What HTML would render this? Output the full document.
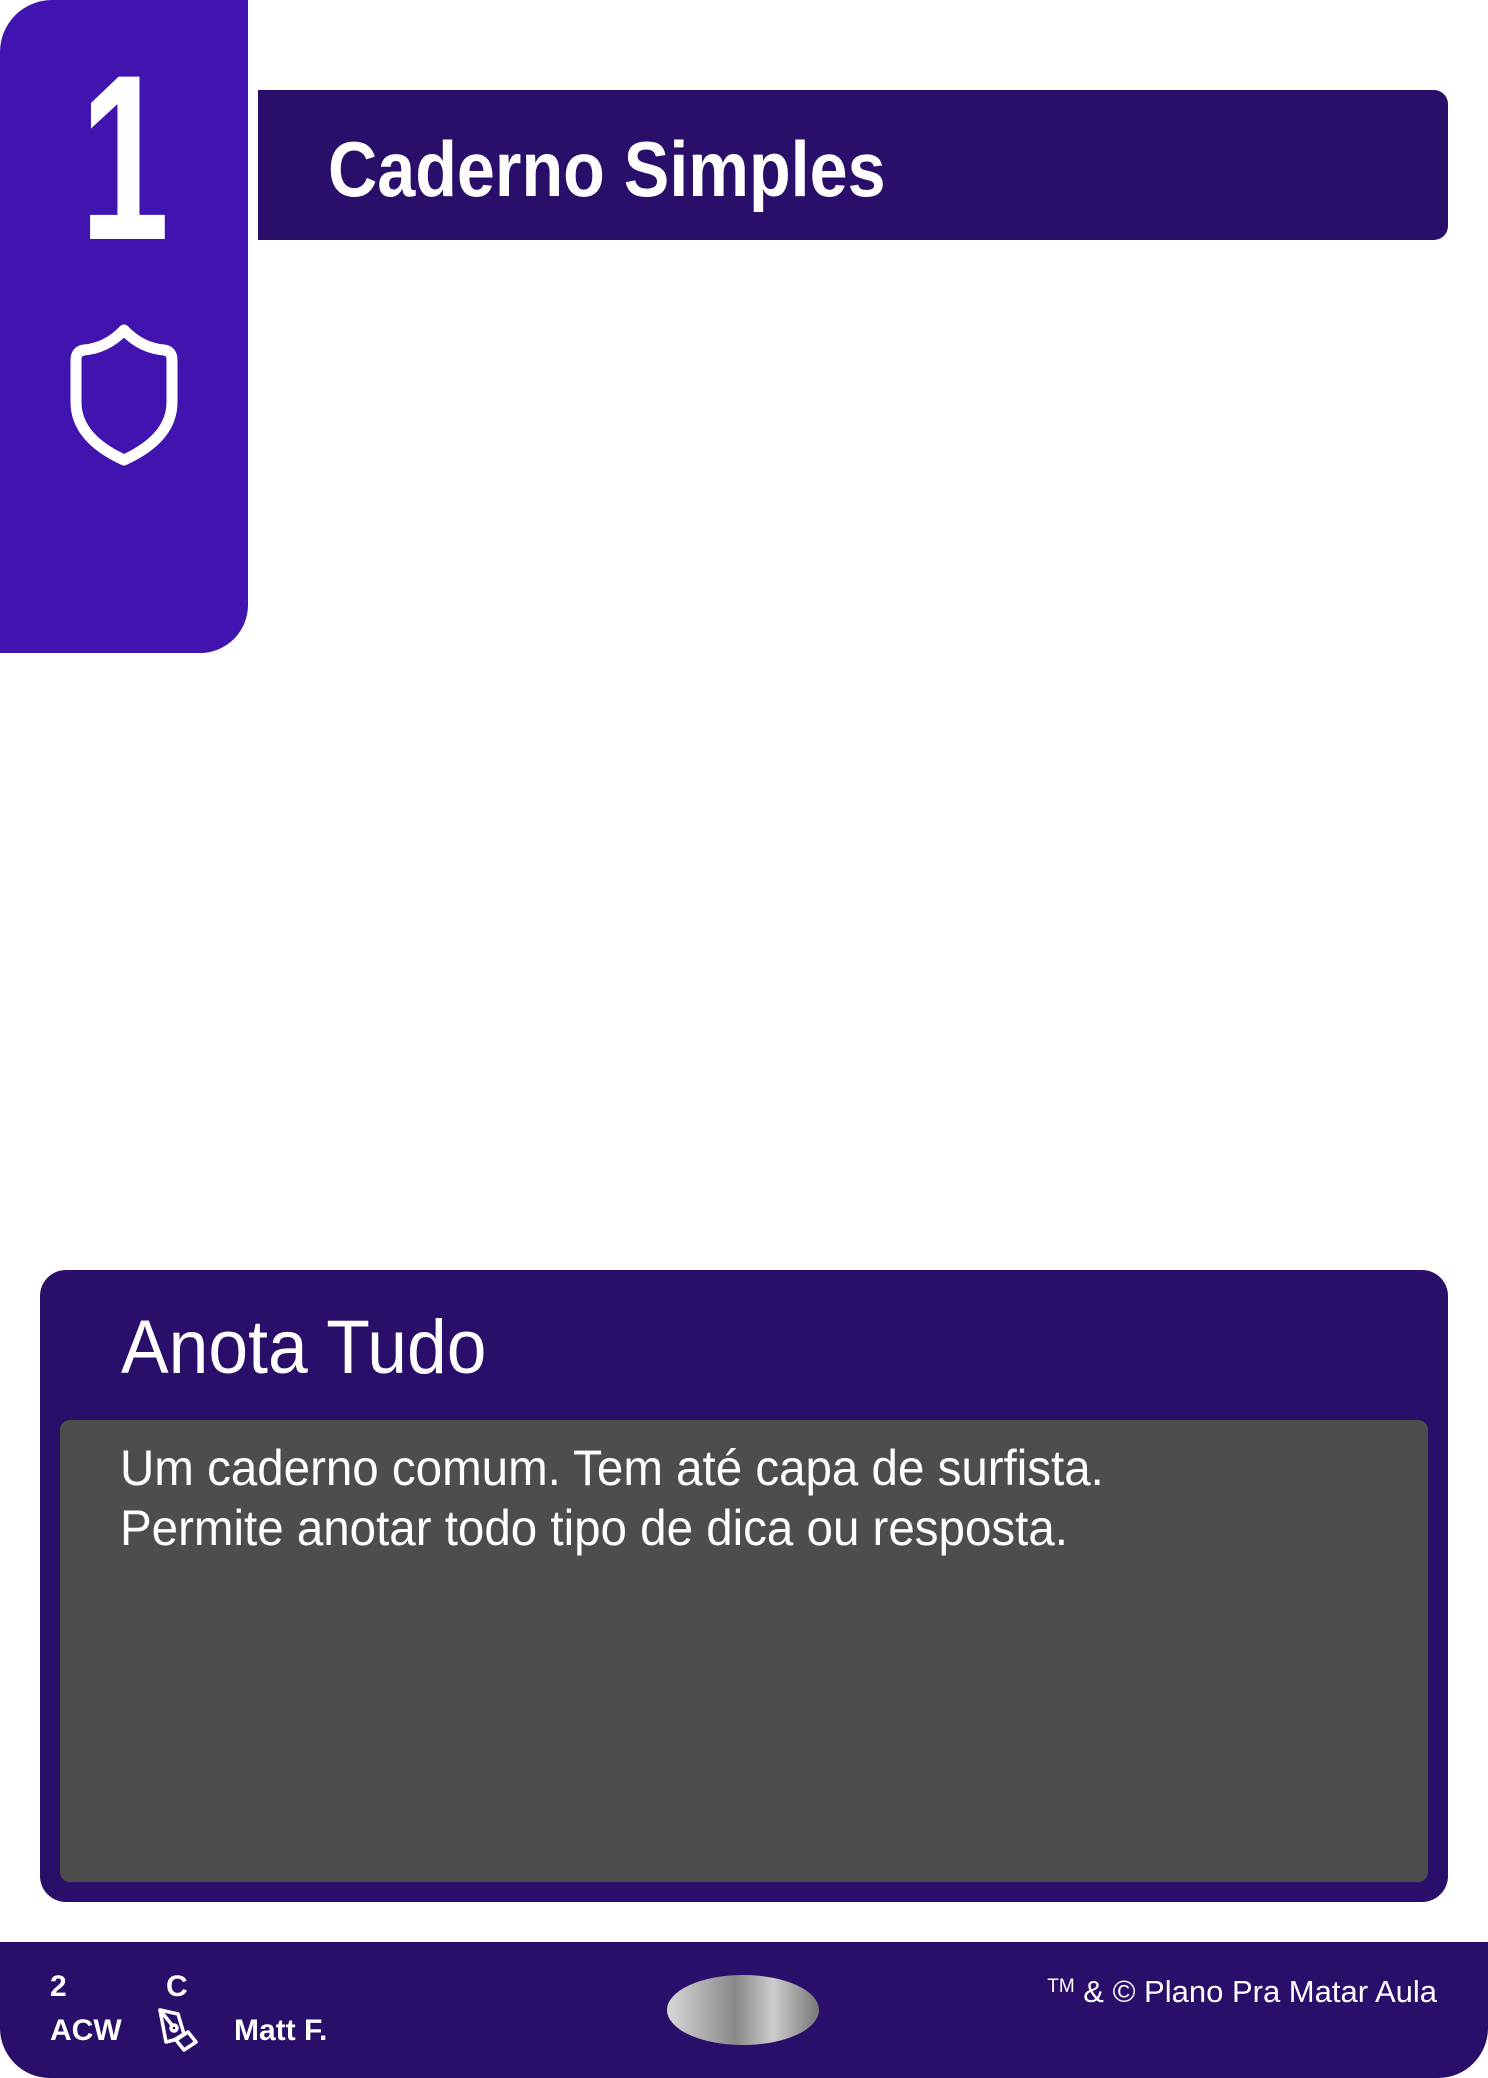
<!DOCTYPE html>
<html><head><meta charset="utf-8"><style>
*{margin:0;padding:0;box-sizing:border-box}
body{width:1488px;height:2078px;background:#fff;position:relative;overflow:hidden;font-family:"Liberation Sans",sans-serif;color:#fff}
.abs{position:absolute}
.sx{display:inline-block;transform-origin:0 0;white-space:nowrap}
</style></head><body>
<div class="abs" style="left:0;top:0;width:248px;height:653px;background:#4114b0;border-radius:52px 0 48px 0"></div>
<div class="abs" style="left:80px;top:40px;font-weight:bold;font-size:236px;line-height:236px"><span class="sx" style="transform:scaleX(0.68)">1</span></div>
<svg class="abs" style="left:62px;top:320px" width="124" height="148" viewBox="0 0 124 148">
<path d="M62 10 Q45 28 22 30 Q14 31 14 40 L14 82 Q14 118 62 140 Q110 118 110 82 L110 40 Q110 31 102 30 Q79 28 62 10Z" fill="none" stroke="#fff" stroke-width="11" stroke-linejoin="round"/>
</svg>
<div class="abs" style="left:258px;top:90px;width:1190px;height:150px;background:#2a0f6a;border-radius:0 14px 14px 0"></div>
<div class="abs" style="left:328px;top:126px;font-weight:bold;font-size:78px;line-height:86px"><span class="sx" style="transform:scaleX(0.875)">Caderno Simples</span></div>

<div class="abs" style="left:40px;top:1270px;width:1408px;height:632px;background:#2a0f6a;border-radius:26px"></div>
<div class="abs" style="left:121px;top:1305px;font-size:76px;line-height:86px"><span class="sx" style="transform:scaleX(0.94)">Anota Tudo</span></div>
<div class="abs" style="left:60px;top:1420px;width:1368px;height:462px;background:#4d4d4d;border-radius:10px"></div>
<div class="abs" style="left:120px;top:1438px;font-size:50px;line-height:60px"><span class="sx" style="transform:scaleX(0.95)">Um caderno comum. Tem até capa de surfista.<br>Permite anotar todo tipo de dica ou resposta.</span></div>

<div class="abs" style="left:0;top:1942px;width:1488px;height:136px;background:#2a0f6a;border-radius:0 0 50px 50px"></div>
<div class="abs" style="left:50px;top:1970px;font-weight:bold;font-size:30px;line-height:34px">2</div>
<div class="abs" style="left:50px;top:2014px;font-weight:bold;font-size:30px;line-height:34px">ACW</div>
<div class="abs" style="left:166px;top:1970px;font-weight:bold;font-size:30px;line-height:34px">C</div>
<div class="abs" style="left:234px;top:2014px;font-weight:bold;font-size:30px;line-height:34px">Matt F.</div>
<svg class="abs" style="left:154px;top:2006px" width="52" height="48" viewBox="0 0 52 48">
<g fill="none" stroke="#fff" stroke-width="3.5" stroke-linejoin="round" stroke-linecap="round">
<path d="M6 4 L24 8 L30 28 L20 34 L12 36 Z"/>
<circle cx="20" cy="22" r="3"/>
<path d="M6 4 L18 19"/>
<path d="M22 34 L34 26 L42 36 L30 44 Z"/>
</g></svg>
<svg class="abs" style="left:666px;top:1974px" width="154" height="72">
<defs><linearGradient id="g" x1="0" x2="1"><stop offset="0" stop-color="#d8d8d8"/><stop offset="0.45" stop-color="#888"/><stop offset="0.7" stop-color="#ccc"/><stop offset="1" stop-color="#777"/></linearGradient></defs>
<ellipse cx="77" cy="36" rx="76" ry="35" fill="url(#g)"/></svg>
<div class="abs" style="right:51px;top:1970px;font-size:31px;line-height:34px"><span><sup style="font-size:19px;vertical-align:10px">TM</sup> &amp; © Plano Pra Matar Aula</span></div>
</body></html>
